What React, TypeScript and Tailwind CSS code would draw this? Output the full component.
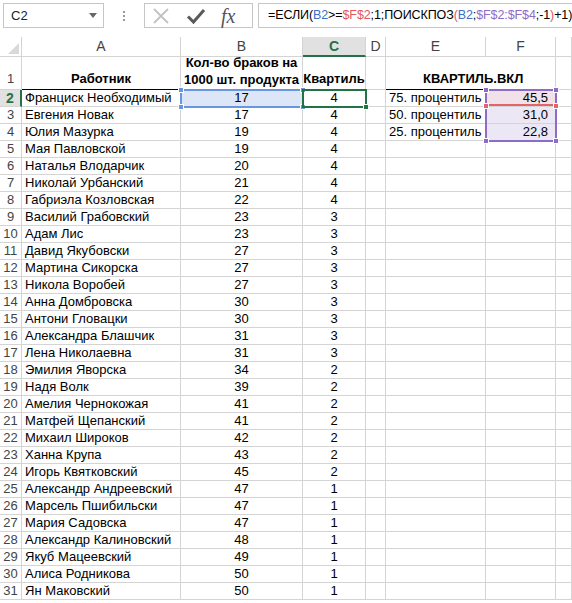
import React from "react";

const rows: [string, number, number][] = [
  ["Франциск Необходимый", 17, 4],
  ["Евгения Новак", 17, 4],
  ["Юлия Мазурка", 19, 4],
  ["Мая Павловской", 19, 4],
  ["Наталья Влодарчик", 20, 4],
  ["Николай Урбанский", 21, 4],
  ["Габриэла Козловская", 22, 4],
  ["Василий Грабовский", 23, 3],
  ["Адам Лис", 23, 3],
  ["Давид Якубовски", 27, 3],
  ["Мартина Сикорска", 27, 3],
  ["Никола Воробей", 27, 3],
  ["Анна Домбровска", 30, 3],
  ["Антони Гловацки", 30, 3],
  ["Александра Блашчик", 31, 3],
  ["Лена Николаевна", 31, 3],
  ["Эмилия Яворска", 34, 2],
  ["Надя Волк", 39, 2],
  ["Амелия Чернокожая", 41, 2],
  ["Матфей Щепанский", 41, 2],
  ["Михаил Широков", 42, 2],
  ["Ханна Крупа", 43, 2],
  ["Игорь Квятковский", 45, 2],
  ["Александр Андреевский", 47, 1],
  ["Марсель Пшибильски", 47, 1],
  ["Мария Садовска", 47, 1],
  ["Александр Калиновский", 48, 1],
  ["Якуб Мацеевский", 49, 1],
  ["Алиса Родникова", 50, 1],
  ["Ян Маковский", 50, 1],
];

const quart: Record<number, [string, string, string]> = {
  2: ["75. процентиль", "45,5", "bg-[#f1e2ea]"],
  3: ["50. процентиль", "31,0", "bg-[#ece7f5]"],
  4: ["25. процентиль", "22,8", "bg-[#ece7f5]"],
};

const cell = "border-r border-b border-[#d4d4d4] overflow-hidden whitespace-nowrap";

function Handle({ cls }: { cls: string }) {
  return <div className={`absolute w-[6px] h-[6px] border border-white ${cls}`} />;
}

function FormulaBar() {
  return (
    <div className="flex items-center h-[31px] pt-[3px] pb-[3px] pl-[3px] gap-[5px]">
      <div className="flex items-center justify-between w-[101px] h-[25px] border border-[#c6c6c6] pl-[7px] pr-[6px] text-[13px] text-[#222]">
        <span>C2</span>
        <svg width="8" height="5" viewBox="0 0 8 5"><path d="M0 0h8L4 5z" fill="#666" /></svg>
      </div>
      <div className="flex flex-col gap-[2px] w-[30px] items-center">
        <div className="w-[2px] h-[2px] bg-[#9a9a9a]" />
        <div className="w-[2px] h-[2px] bg-[#9a9a9a]" />
        <div className="w-[2px] h-[2px] bg-[#9a9a9a]" />
      </div>
      <div className="flex items-center h-[25px] w-[109px] border border-[#c6c6c6]">
        <svg className="ml-[7px]" width="18" height="18" viewBox="0 0 18 18">
          <path d="M2 2L16 16M16 2L2 16" stroke="#c2c2c2" strokeWidth="1.8" />
        </svg>
        <svg className="ml-[16px]" width="20" height="18" viewBox="0 0 20 18">
          <path d="M2 9.5L7.5 15L18 3" stroke="#5a5a5a" strokeWidth="3" fill="none" />
        </svg>
        <span className="ml-[15px] text-[20px] leading-none italic text-[#555]" style={{ fontFamily: '"Liberation Serif", serif' }}>
          fx
        </span>
      </div>
      <div className="flex-1 flex items-center h-[25px] border border-[#c6c6c6] border-r-0 pl-[9px] text-[12.5px] tracking-[-0.1px] text-black whitespace-nowrap overflow-hidden">
        <span>=ЕСЛИ(</span>
        <span className="text-[#3d6fc6]">B2</span>
        <span>&gt;=</span>
        <span className="text-[#e4555c]">$F$2</span>
        <span>;1;ПОИСКПОЗ</span>
        <span className="text-[#e4555c]">(</span>
        <span className="text-[#3d6fc6]">B2</span>
        <span>;</span>
        <span className="text-[#8d6bc6]">$F$2:$F$4</span>
        <span>;-1</span>
        <span className="text-[#e4555c]">)</span>
        <span>+1)</span>
      </div>
    </div>
  );
}

export default function App() {
  const letters = ["A", "B", "C", "D", "E", "F", ""];
  return (
    <div className="w-[572px] h-[603px] bg-white overflow-hidden text-[13px]" style={{ fontFamily: '"Liberation Sans", Arial, sans-serif' }}>
      <FormulaBar />
      <div className="h-[6px]" />
      <div className="relative grid grid-cols-[22px_159px_122px_63px_20px_100px_70px_1fr] grid-rows-[20px_33px] auto-rows-[17px]">
        {/* corner */}
        <div className={`${cell} relative`}>
          <svg className="absolute right-[2px] bottom-[2px]" width="11" height="11" viewBox="0 0 11 11">
            <path d="M11 0V11H0z" fill="#d9d9d9" />
          </svg>
        </div>
        {letters.map((l, i) =>
          l === "C" ? (
            <div key={i} className="border-r border-[#d4d4d4] border-b-2 border-b-[#217346] bg-[#e1e1e1] flex items-center justify-center text-[#217346] font-bold text-[14px]">
              C
            </div>
          ) : (
            <div key={i} className={`${cell} flex items-center justify-center text-[#444] text-[14px]`}>
              {l}
            </div>
          )
        )}

        {/* row 1 */}
        <div className={`${cell} flex items-end justify-center pb-[1px] text-[#444]`}>1</div>
        <div className="border-r border-[#d4d4d4] border-b border-b-black flex items-end justify-center pb-[1px] font-bold">Работник</div>
        <div className="border-r border-[#d4d4d4] border-b border-b-black flex flex-col items-center justify-end pb-[1px] font-bold leading-[17px]">
          <span>Кол-во браков на</span>
          <span>1000 шт. продукта</span>
        </div>
        <div className="border-r border-[#d4d4d4] border-b border-b-black flex items-end justify-center pb-[1px] font-bold">Квартиль</div>
        <div className={cell} />
        <div className="relative border-b border-b-black">
          <span className="absolute bottom-[1px] left-[37px] font-bold whitespace-nowrap">КВАРТИЛЬ.ВКЛ</span>
        </div>
        <div className="border-r border-[#d4d4d4] border-b border-b-black" />
        <div className={cell} />

        {rows.map(([name, b, c], idx) => {
          const r = idx + 2;
          const q = quart[r];
          return (
            <React.Fragment key={r}>
              {r === 2 ? (
                <div className="border-b border-[#d4d4d4] border-r-2 border-r-[#217346] bg-[#e1e1e1] flex items-center justify-center font-bold text-[#217346] text-[14px]">
                  2
                </div>
              ) : (
                <div className={`${cell} flex items-center justify-center text-[#444]`}>{r}</div>
              )}
              <div className={`${cell} flex items-center pl-[3px]`}>{name}</div>
              <div className={`${cell} flex items-center justify-center ${r === 2 ? "bg-[#dce6f7]" : ""}`}>{b}</div>
              <div className={`${cell} flex items-center justify-center`}>{c}</div>
              <div className={cell} />
              <div className={`${cell} flex items-center pl-[3px]`}>{q ? q[0] : ""}</div>
              <div className={`${cell} flex items-center justify-end pr-[7px] ${q ? q[2] : ""}`}>{q ? q[1] : ""}</div>
              <div className={cell} />
            </React.Fragment>
          );
        })}

        {/* B2 selection */}
        <div className="absolute left-[180px] top-[52px] w-[124px] h-[19px] border-2 border-[#6a96df] pointer-events-none">
          <Handle cls="-left-[4px] -top-[4px] bg-[#6a96df]" />
          <Handle cls="-right-[4px] -top-[4px] bg-[#6a96df]" />
          <Handle cls="-left-[4px] -bottom-[4px] bg-[#6a96df]" />
          <Handle cls="-right-[4px] -bottom-[4px] bg-[#6a96df]" />
        </div>

        {/* C2 active cell */}
        <div className="absolute left-[302px] top-[52px] w-[65px] h-[19px] border-2 border-[#217346] pointer-events-none">
          <Handle cls="-right-[4px] -bottom-[4px] bg-[#217346]" />
        </div>

        {/* F2:F4 range */}
        <div className="absolute left-[485px] top-[52px] w-[72px] h-[53px] border-2 border-[#8d6bc6] pointer-events-none">
          <div className="h-[15px] border-b-2 border-[#e4626a]" />
          <Handle cls="-left-[4px] -top-[4px] bg-[#8d6bc6]" />
          <Handle cls="-right-[4px] -top-[4px] bg-[#8d6bc6]" />
          <Handle cls="-left-[4px] top-[12px] bg-[#e4626a]" />
          <Handle cls="-right-[4px] top-[12px] bg-[#e4626a]" />
          <Handle cls="-left-[4px] -bottom-[4px] bg-[#8d6bc6]" />
          <Handle cls="-right-[4px] -bottom-[4px] bg-[#8d6bc6]" />
        </div>
      </div>
    </div>
  );
}
